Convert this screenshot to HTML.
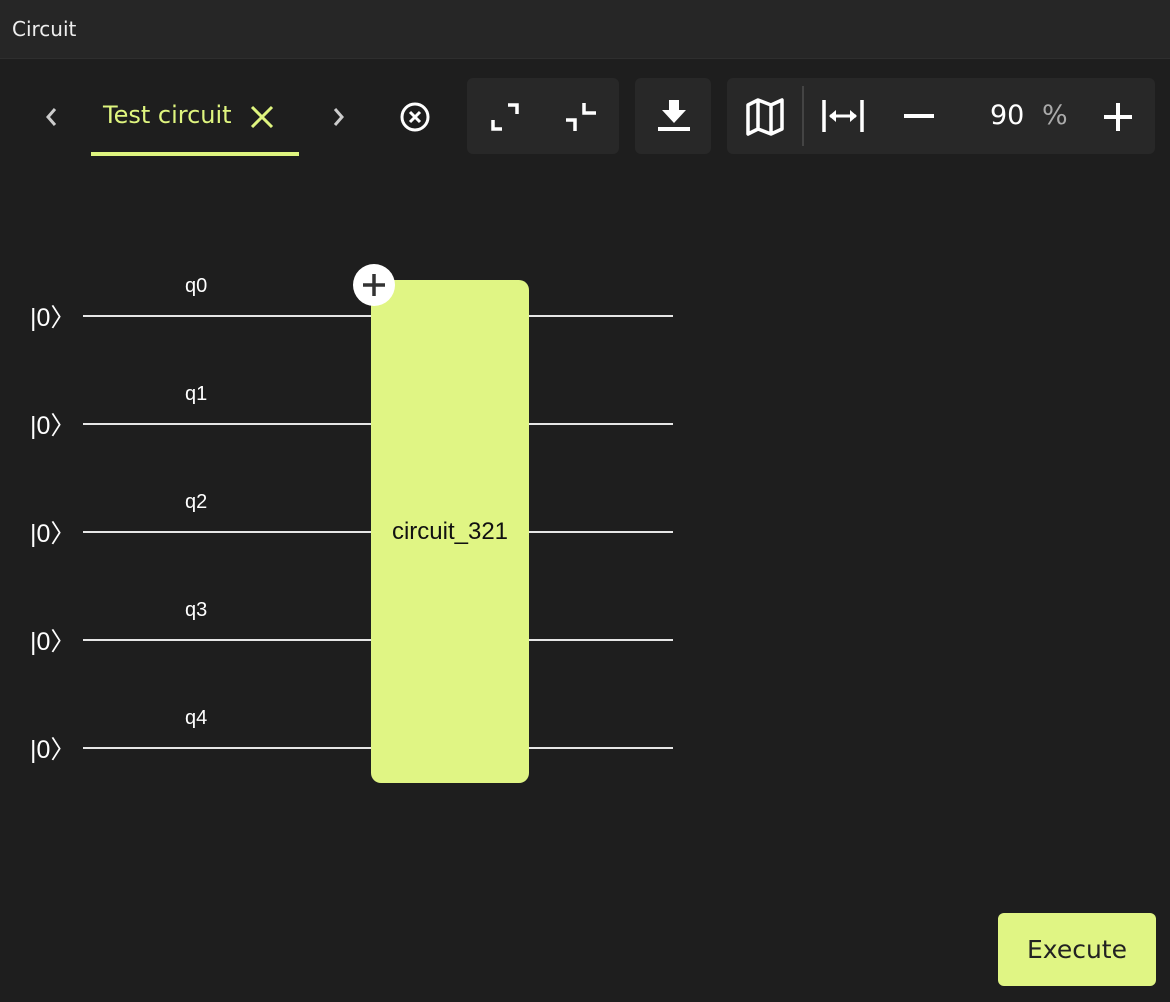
<!DOCTYPE html>
<html><head><meta charset="utf-8"><style>
*{margin:0;padding:0;box-sizing:border-box}
body{width:1170px;height:1002px;background:#1e1e1e;font-family:"DejaVu Sans","Liberation Sans",sans-serif;color:#fff;position:relative;overflow:hidden}
.hdr{position:absolute;left:0;top:0;width:1170px;height:59px;background:#262626;border-bottom:1px solid #2e2e2e}
.hdr span{position:absolute;left:12px;top:17px;font-size:20px;color:#eee}
.grp{position:absolute;top:78px;height:76px;background:#282828;border-radius:6px}
.a{position:absolute}
.line{position:absolute;height:2px;background:#e6e6e6}
.ket{position:absolute;left:30px;font-family:"Liberation Sans",sans-serif;font-size:25px;color:#fff}
.ql{position:absolute;left:185px;font-family:"Liberation Sans",sans-serif;font-size:20px;color:#fff}
</style></head><body>
<div class="hdr"><span>Circuit</span></div>

<svg class="a" style="left:40px;top:104px" width="22" height="26" viewBox="0 0 22 26"><path d="M15 5 L8 13 L15 21" stroke="#ccc" stroke-width="3" fill="none"/></svg>
<div class="a" style="left:103px;top:101px;font-size:24px;color:#dff57f">Test circuit</div>
<svg class="a" style="left:249px;top:104px" width="26" height="26"><path d="M3 3 L23 23 M23 3 L3 23" stroke="#dff57f" stroke-width="3"/></svg>
<div class="a" style="left:91px;top:152px;width:208px;height:4px;background:#dff57f"></div>
<svg class="a" style="left:328px;top:104px" width="22" height="26"><path d="M7 5 L14 13 L7 21" stroke="#ccc" stroke-width="3" fill="none"/></svg>
<svg class="a" style="left:398px;top:101px" width="34" height="32"><circle cx="17" cy="16" r="13" stroke="#fff" stroke-width="3" fill="none"/><path d="M12 11 L22 21 M22 11 L12 21" stroke="#fff" stroke-width="3"/></svg>

<div class="grp" style="left:467px;width:152px"></div>
<svg class="a" style="left:490px;top:102px" width="30" height="30"><path d="M3 18 V27 H12 M18 3 H27 V12" stroke="#fff" stroke-width="3.5" fill="none"/></svg>
<svg class="a" style="left:563px;top:100px" width="36" height="34"><path d="M3 20 H12 V31 M21 3 V13 H33" stroke="#fff" stroke-width="3.5" fill="none"/></svg>

<div class="grp" style="left:635px;width:76px"></div>
<svg class="a" style="left:656px;top:98px" width="36" height="36"><path d="M13 2 H23 V12 H30 L18 25 L6 12 H13 Z" fill="#fff"/><rect x="2" y="29" width="32" height="4" fill="#fff"/></svg>

<div class="grp" style="left:727px;width:428px"></div>
<div class="a" style="left:802px;top:86px;width:2px;height:60px;background:#444"></div>
<svg class="a" style="left:744px;top:97px" width="42" height="40"><path d="M4 8 L14 3 L27 8 L38 3 V32 L27 37 L14 32 L4 37 Z M14 3 V32 M27 8 V37" stroke="#fff" stroke-width="3.5" fill="none" stroke-linejoin="round"/></svg>
<svg class="a" style="left:820px;top:98px" width="46" height="36"><path d="M4 2 V34 M42 2 V34" stroke="#fff" stroke-width="3.5"/><path d="M10 18 H36" stroke="#fff" stroke-width="3"/><path d="M9 18 L16 12 V24 Z M37 18 L30 12 V24 Z" fill="#fff"/></svg>
<div class="a" style="left:904px;top:114px;width:30px;height:4px;background:#fff"></div>
<div class="a" style="left:990px;top:100px;font-size:27px;color:#fff">90</div>
<div class="a" style="left:1042px;top:100px;font-size:27px;color:#aaa">%</div>
<svg class="a" style="left:1102px;top:101px" width="32" height="32"><path d="M16 2 V30 M2 16 H30" stroke="#fff" stroke-width="4"/></svg>

<div class="ql" style="top:275px">q0</div>
<div class="ql" style="top:383px">q1</div>
<div class="ql" style="top:491px">q2</div>
<div class="ql" style="top:599px">q3</div>
<div class="ql" style="top:707px">q4</div>
<div class="ket" style="top:298px">|0〉</div>
<div class="ket" style="top:406px">|0〉</div>
<div class="ket" style="top:514px">|0〉</div>
<div class="ket" style="top:622px">|0〉</div>
<div class="ket" style="top:730px">|0〉</div>
<div class="line" style="left:83px;top:315px;width:590px"></div>
<div class="line" style="left:83px;top:423px;width:590px"></div>
<div class="line" style="left:83px;top:531px;width:590px"></div>
<div class="line" style="left:83px;top:639px;width:590px"></div>
<div class="line" style="left:83px;top:747px;width:590px"></div>
<div class="a" style="left:371px;top:280px;width:158px;height:503px;background:#e0f584;border-radius:10px"></div>
<div class="a" style="left:371px;top:518px;width:158px;text-align:center;font-family:'Liberation Sans',sans-serif;font-size:24px;color:#111">circuit_321</div>
<svg class="a" style="left:352px;top:263px" width="46" height="46"><circle cx="22" cy="22" r="21" fill="#fff"/><path d="M22 11 V33 M11 22 H33" stroke="#333" stroke-width="3.5"/></svg>

<div class="a" style="left:998px;top:913px;width:158px;height:73px;background:#e0f584;border-radius:6px;color:#222;font-size:25px;text-align:center;line-height:73px">Execute</div>
</body></html>
